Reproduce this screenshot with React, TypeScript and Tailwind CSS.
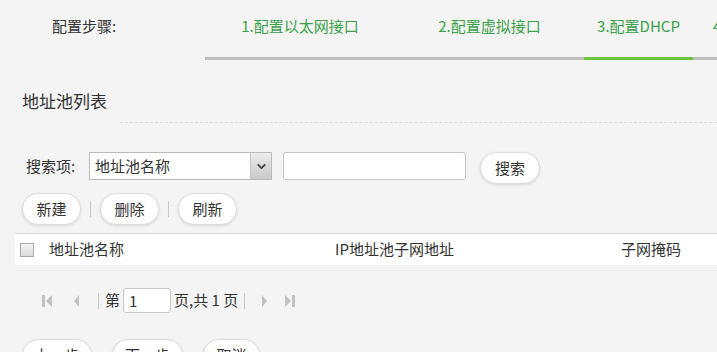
import { ChevronDown } from "lucide-react";

const FONT = "font-['Microsoft_YaHei','Noto_Sans_CJK_SC',sans-serif]";

const STEPS = [
  { label: "1.配置以太网接口", width: "w-[190px] justify-center", active: false },
  { label: "2.配置虚拟接口", width: "w-[189px] justify-center", active: false },
  { label: "3.配置DHCP", width: "w-[109px] justify-center", active: true },
  { label: "4.完成", width: "w-[60px] pl-[20px]", active: false },
];

function PillButton({ label, className = "" }: { label: string; className?: string }) {
  return (
    <button
      type="button"
      className={`flex h-[32px] shrink-0 items-center justify-center rounded-full border border-[#dcdcdc] bg-white text-[15px] text-[#333] shadow-[0_1px_3px_rgba(0,0,0,0.12)] ${className}`}
    >
      {label}
    </button>
  );
}

function Sep() {
  return <span className="mx-[9px] h-[16px] w-px bg-[#c8c8c8]" />;
}

function PagerIcon({ kind }: { kind: "first" | "prev" | "next" | "last" }) {
  return (
    <svg width="14" height="16" viewBox="0 0 14 16" className="text-[#c2c2c2]">
      {kind === "first" && (
        <>
          <rect x="1" y="2" width="3" height="12" fill="currentColor" />
          <path d="M11 2 L5 8 L11 14 Z" fill="currentColor" />
        </>
      )}
      {kind === "prev" && <path d="M9 2 L4 8 L9 14 Z" fill="currentColor" />}
      {kind === "next" && <path d="M5 2 L10 8 L5 14 Z" fill="currentColor" />}
      {kind === "last" && (
        <>
          <path d="M3 2 L9 8 L3 14 Z" fill="currentColor" />
          <rect x="10" y="2" width="3" height="12" fill="currentColor" />
        </>
      )}
    </svg>
  );
}

export default function App() {
  return (
    <div className={`h-[352px] w-[717px] overflow-hidden bg-[#f4f4f4] text-[15px] text-[#333] ${FONT}`}>
      {/* steps header */}
      <div className="flex">
        <div className="w-[205px] shrink-0 pl-[52px] pt-[16px] leading-[20px] text-[#333]">配置步骤:</div>
        {STEPS.map((s) => (
          <div
            key={s.label}
            className={`flex h-[60px] shrink-0 whitespace-nowrap border-b-[3px] pt-[16px] leading-[20px] text-[#3aa149] ${s.width} ${
              s.active ? "border-[#6cc43e]" : "border-[#bdbdbd]"
            }`}
          >
            {s.label}
          </div>
        ))}
      </div>

      {/* title */}
      <div className="mt-[29px] pl-[22px] text-[17px] leading-[24px] text-[#333]">地址池列表</div>
      <div className="ml-[120px] mt-[9px] border-t border-dashed border-[#dedede]" />

      {/* search row */}
      <div className="mt-[29px] flex items-start">
        <span className="ml-[26px] w-[63px] pt-[4px] leading-[20px]">搜索项:</span>
        <div className="flex h-[28px] w-[183px] border border-[#b9b9b9] bg-white">
          <span className="flex-1 pl-[5px] leading-[25px]">地址池名称</span>
          <span className="flex w-[21px] items-center justify-center border-l border-[#c4c4c4] bg-gradient-to-b from-[#ececec] to-[#c9c9c9]">
            <ChevronDown size={13} strokeWidth={3.5} className="text-[#444]" />
          </span>
        </div>
        <input
          className="ml-[11px] h-[28px] w-[183px] rounded-[3px] border border-[#c4c4c4] bg-white px-2 outline-none"
          defaultValue=""
        />
        <PillButton label="搜索" className="ml-[14px] w-[60px]" />
      </div>

      {/* action buttons */}
      <div className="mt-[9px] flex items-center pl-[22px]">
        <PillButton label="新建" className="w-[59px]" />
        <Sep />
        <PillButton label="删除" className="w-[59px]" />
        <Sep />
        <PillButton label="刷新" className="w-[59px]" />
      </div>

      {/* table header */}
      <div className="ml-[15px] mt-[8px] flex h-[32px] items-center border-t border-[#dcdcdc] bg-white">
        <span className="ml-[5px] h-[14px] w-[14px] border border-[#a9a9a9] bg-gradient-to-b from-[#f4f4f4] to-[#dcdcdc]" />
        <span className="ml-[15px] w-[286px]">地址池名称</span>
        <span className="w-[286px]">IP地址池子网地址</span>
        <span>子网掩码</span>
      </div>
      <div className="ml-[15px] mt-[5px] border-t border-[#ececec]" />

      {/* pager */}
      <div className="mt-[17px] flex h-[25px] items-center pl-[41px] text-[#333]">
        <PagerIcon kind="first" />
        <span className="ml-[15px]">
          <PagerIcon kind="prev" />
        </span>
        <span className="ml-[14px] h-[16px] w-px bg-[#c8c8c8]" />
        <span className="ml-[6px]">第</span>
        <input
          className="ml-[3px] h-[25px] w-[48px] rounded-[3px] border border-[#c8c8c8] bg-white px-[5px] outline-none"
          defaultValue="1"
        />
        <span className="ml-[3px] whitespace-nowrap">页,共 1 页</span>
        <span className="ml-[6px] h-[16px] w-px bg-[#c8c8c8]" />
        <span className="ml-[12px]">
          <PagerIcon kind="next" />
        </span>
        <span className="ml-[11px]">
          <PagerIcon kind="last" />
        </span>
      </div>

      {/* wizard buttons */}
      <div className="mt-[26px] flex gap-[20px] pl-[22px]">
        <PillButton label="上一步" className="w-[70px]" />
        <PillButton label="下一步" className="w-[71px]" />
        <PillButton label="取消" className="w-[57px]" />
      </div>
    </div>
  );
}
